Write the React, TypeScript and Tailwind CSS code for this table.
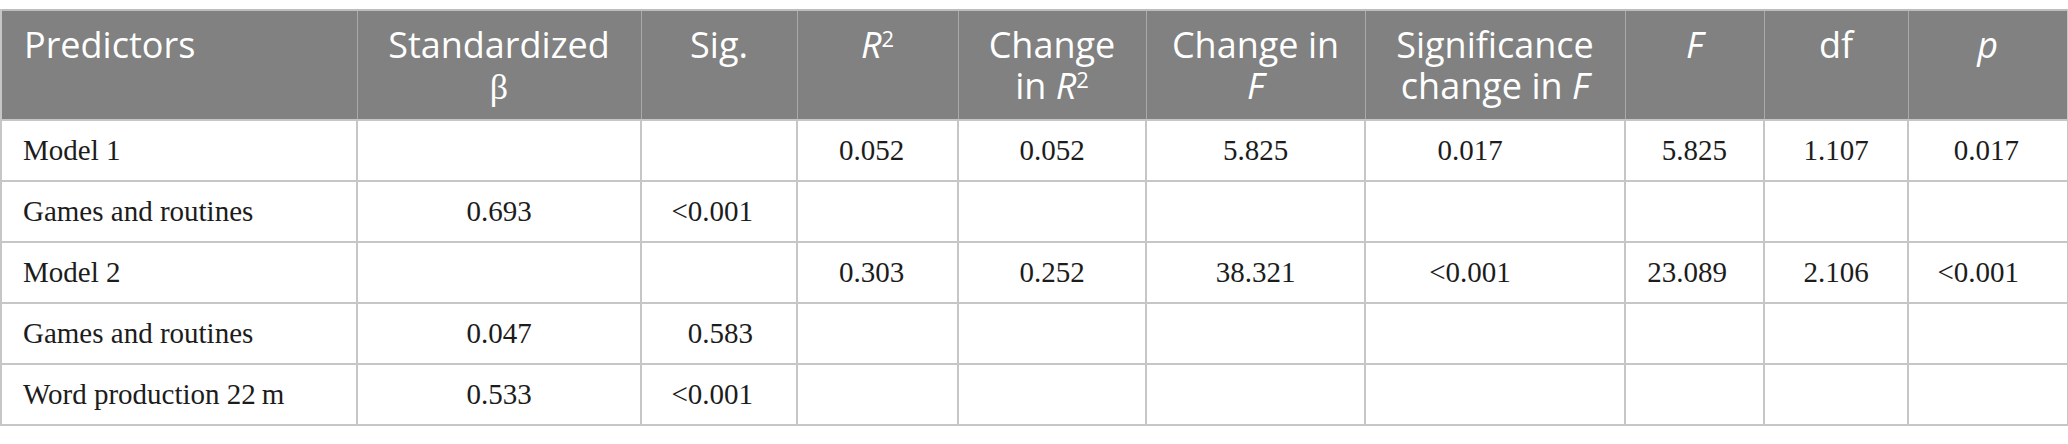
import React from "react";

const widths = [356, 284, 156, 161, 188, 219, 260, 139, 144, 160];

const rows: { label: string; cells: string[] }[] = [
  { label: "Model 1", cells: ["", "", "0.052", "0.052", "5.825", "0.017", "5.825", "1.107", "0.017"] },
  { label: "Games and routines", cells: ["0.693", "<0.001", "", "", "", "", "", "", ""] },
  { label: "Model 2", cells: ["", "", "0.303", "0.252", "38.321", "<0.001", "23.089", "2.106", "<0.001"] },
  { label: "Games and routines", cells: ["0.047", "0.583", "", "", "", "", "", "", ""] },
  { label: "Word production 22\u2009m", cells: ["0.533", "<0.001", "", "", "", "", "", "", ""] },
];

const colAlign = [
  "text-center",
  "text-right pr-[43px]",
  "text-center pr-[12px]",
  "text-center",
  "text-center",
  "text-center pr-[50px]",
  "text-right pr-[36px]",
  "text-center",
  "text-right pr-[48px]",
];

export default function App() {
  const th =
    "bg-[#808180] text-white font-normal align-top pt-[13px] text-[36px] leading-[41px] border-x border-[#a9aaa9] text-center";
  const td =
    "h-[61px] border-2 border-[#c6c6c6] align-middle text-[29px] text-[#1c1c1c]";
  return (
    <div className="w-[2068px] h-[444px] bg-white pt-[9px]">
      <table className="table-fixed border-collapse" style={{ width: 2067 }}>
        <colgroup>
          {widths.map((w, i) => (
            <col key={i} style={{ width: w }} />
          ))}
        </colgroup>
        <thead className="font-['Open_Sans',sans-serif]">
          <tr className="h-[110px] border-t-2 border-[#bdbdbd]">
            <th className={`${th} !text-left pl-[22px] border-l-2 border-l-[#c6c6c6]`}>Predictors</th>
            <th className={th}>
              Standardized
              <br />
              <span className="font-['Liberation_Serif',serif]">β</span>
            </th>
            <th className={th}>Sig.</th>
            <th className={th}>
              <i>R</i>
              <sup className="text-[22px]">2</sup>
            </th>
            <th className={th}>
              Change
              <br />
              in <i>R</i>
              <sup className="text-[22px]">2</sup>
            </th>
            <th className={th}>
              Change in
              <br />
              <i>F</i>
            </th>
            <th className={th}>
              Significance
              <br />
              change in <i>F</i>
            </th>
            <th className={th}>
              <i>F</i>
            </th>
            <th className={th}>df</th>
            <th className={`${th} border-r-2 border-r-[#c6c6c6]`}>
              <i>p</i>
            </th>
          </tr>
        </thead>
        <tbody className="font-['Liberation_Serif',serif]">
          {rows.map((r, ri) => (
            <tr key={ri}>
              <td className={`${td} text-left pl-[21px]`}>{r.label}</td>
              {r.cells.map((c, ci) => (
                <td key={ci} className={`${td} ${colAlign[ci]}`}>
                  {c}
                </td>
              ))}
            </tr>
          ))}
        </tbody>
      </table>
    </div>
  );
}
